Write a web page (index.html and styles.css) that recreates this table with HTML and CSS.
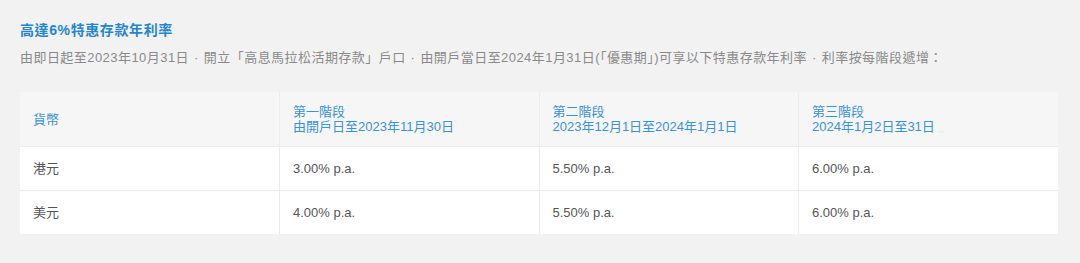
FILE: index.html
```html
<!DOCTYPE html>
<html lang="zh-Hant">
<head>
<meta charset="utf-8">
<link rel="stylesheet" href="styles.css">
</head>
<body>
<div class="page">
  <h2 class="title">高達6%特惠存款年利率</h2>
  <p class="desc">由即日起至2023年10月31日<span class="sep">·</span>開立「高息馬拉松活期存款」戶口<span class="sep">·</span>由開戶當日至2024年1月31日(「優惠期」)可享以下特惠存款年利率<span class="sep">·</span>利率按每階段遞增：</p>
  <table class="rates">
    <thead>
      <tr>
        <th>貨幣</th>
        <th>第一階段<br>由開戶日至2023年11月30日</th>
        <th>第二階段<br>2023年12月1日至2024年1月1日</th>
        <th>第三階段<br>2024年1月2日至31日</th>
      </tr>
    </thead>
    <tbody>
      <tr><td>港元</td><td>3.00% p.a.</td><td>5.50% p.a.</td><td>6.00% p.a.</td></tr>
      <tr><td>美元</td><td>4.00% p.a.</td><td>5.50% p.a.</td><td>6.00% p.a.</td></tr>
    </tbody>
  </table>
</div>
</body>
</html>
```

FILE: styles.css
```css
html, body {
  margin: 0;
  padding: 0;
  background: #f2f2f2;
}
body {
  font-family: "Liberation Sans", Arial, "Noto Sans CJK TC", sans-serif;
}
.page {
  padding: 21px 20px 0 20px;
}
.title {
  margin: 0;
  font-size: 14px;
  line-height: 18px;
  font-weight: bold;
  color: #2586c8;
  letter-spacing: 0.6px;
}
.desc {
  margin: 10px 0 0 0;
  font-size: 13px;
  line-height: 18px;
  color: #8a8a8a;
  letter-spacing: 0.45px;
}
.sep {
  display: inline-block;
  padding: 0 5px;
}
.rates {
  margin-top: 25px;
  width: 1038px;
  border-collapse: collapse;
  table-layout: fixed;
  font-size: 13px;
}
.rates th, .rates td {
  border: 1px solid #ececec;
  text-align: left;
  padding: 0 13px;
  vertical-align: middle;
}
.rates tr > :first-child { border-left: none; }
.rates tr > :last-child { border-right: none; }
.rates thead tr > * { border-top: none; }
.rates tbody tr:last-child > * { border-bottom: none; }
.rates th {
  background: #f6f6f6;
  color: #3b93d0;
  font-weight: normal;
  height: 54px;
  line-height: 15px;
}
.rates td {
  background: #ffffff;
  color: #555555;
  height: 43px;
  line-height: 16px;
}
```
